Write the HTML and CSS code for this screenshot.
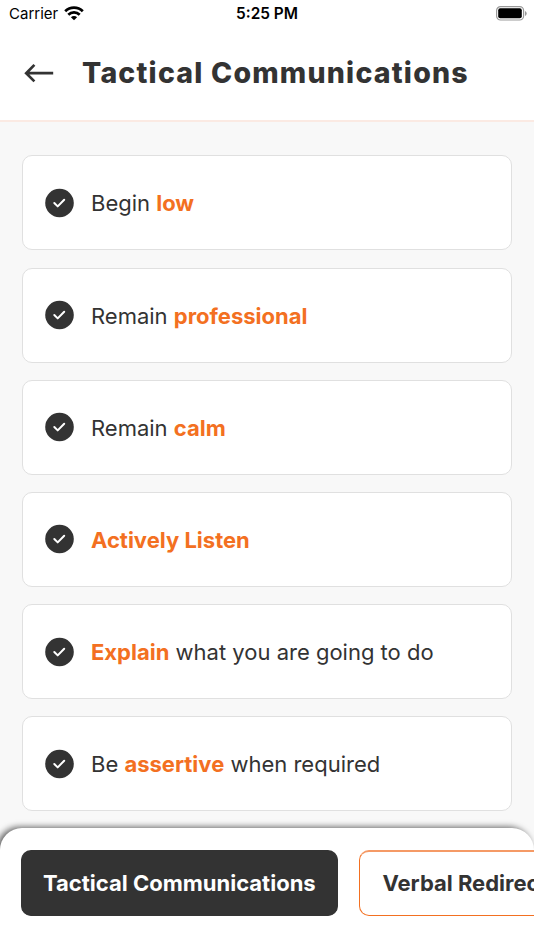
FILE: index.html
```html
<!DOCTYPE html>
<html lang="en">
<head>
<meta charset="utf-8">
<title>Tactical Communications</title>
<link rel="stylesheet" href="styles.css">
</head>
<body>
<div class="screen">
  <div class="status">
    <div class="carrier"><span>Carrier</span>
      <svg width="20" height="15" viewBox="0 0 20 15" fill="none" stroke="#000" stroke-width="2.7"><path d="M1.2 5.3a12.5 12.5 0 0 1 17.6 0M4.3 8.7a8 8 0 0 1 11.4 0"/><path d="M10 14.3L6.9 11.3a4.4 4.4 0 0 1 6.2 0z" fill="#000" stroke="none"/></svg>
    </div>
    <div class="time">5:25 PM</div>
    <svg class="battery" width="31" height="15" viewBox="0 0 31 15"><rect x=".6" y=".6" width="27" height="13.4" rx="4" fill="none" stroke="#999" stroke-width="1.2"/><rect x="2.2" y="2.3" width="23.6" height="10" rx="2"/><path d="M29 5v5q1.7-.8 1.7-2.5T29 5z" fill="#999"/></svg>
  </div>
  <header class="header">
    <svg class="back" width="30" height="20" viewBox="0 0 30 20" fill="none" stroke="#333" stroke-width="2.7"><path d="M29.2 10.2H2.4M10.4 1.9L2.2 10.2l8.2 8.2"/></svg>
    <h1>Tactical Communications</h1>
  </header>
  <main class="list">
    <div class="card"><svg class="check" viewBox="0 0 30 30"><circle cx="14.5" cy="15" r="14.3"/><path d="M9.3 15l3.4 3.4 6.5-6.7"/></svg><p>Begin <b>low</b></p></div>
    <div class="card"><svg class="check" viewBox="0 0 30 30"><circle cx="14.5" cy="15" r="14.3"/><path d="M9.3 15l3.4 3.4 6.5-6.7"/></svg><p>Remain <b>professional</b></p></div>
    <div class="card"><svg class="check" viewBox="0 0 30 30"><circle cx="14.5" cy="15" r="14.3"/><path d="M9.3 15l3.4 3.4 6.5-6.7"/></svg><p>Remain <b>calm</b></p></div>
    <div class="card"><svg class="check" viewBox="0 0 30 30"><circle cx="14.5" cy="15" r="14.3"/><path d="M9.3 15l3.4 3.4 6.5-6.7"/></svg><p><b>Actively Listen</b></p></div>
    <div class="card"><svg class="check" viewBox="0 0 30 30"><circle cx="14.5" cy="15" r="14.3"/><path d="M9.3 15l3.4 3.4 6.5-6.7"/></svg><p><b>Explain</b> what you are going to do</p></div>
    <div class="card"><svg class="check" viewBox="0 0 30 30"><circle cx="14.5" cy="15" r="14.3"/><path d="M9.3 15l3.4 3.4 6.5-6.7"/></svg><p>Be <b>assertive</b> when required</p></div>
  </main>
  <nav class="tabs">
    <div class="tab active">Tactical Communications</div>
    <div class="tab">Verbal Redirection</div>
  </nav>
</div>
</body>
</html>
```
FILE: styles.css
```css
* { box-sizing: border-box; }
body { margin: 0; font-family: Inter, sans-serif; color: #333; }
.screen { width: 534px; height: 950px; overflow: hidden; display: flex; flex-direction: column; background: #f8f8f8; }
.status { height: 27px; flex: none; background: #fff; display: grid; grid-template-columns: 1fr auto 1fr; align-items: center; padding: 0 7px 0 9px; color: #000; }
.carrier { display: flex; align-items: center; gap: 6px; font-size: 15px; }
.carrier svg { margin-top: -1px; }
.time { font-size: 15.4px; font-weight: 600; margin-right: 2px; }
.battery { justify-self: end; }
.header { height: 95px; flex: none; background: #fff; border-bottom: 2px solid #fbeae3; display: flex; align-items: center; padding: 0 24px 1px; gap: 28px; }
h1 { margin: -1px 0 0; font-size: 28.5px; font-weight: 800; letter-spacing: 1.2px; white-space: nowrap; }
.list { flex: none; height: 706px; padding: 33.4px 22.4px 0; display: flex; flex-direction: column; gap: 17.2px; }
.card { height: 95px; flex: none; background: #fff; border: 1.5px solid #e0e0e0; border-radius: 10px; display: flex; align-items: center; padding: 0 21.6px; gap: 16px; }
.check { width: 30px; height: 30px; fill: #333; }
.check path { fill: none; stroke: #fff; stroke-width: 2; stroke-linecap: round; stroke-linejoin: round; }
p { margin: 1px 0 0; font-size: 22px; font-weight: 430; white-space: nowrap; }
b { color: #f37021; font-weight: 680; }
.tabs { height: 122px; flex: none; background: #fff; border-radius: 22px 22px 0 0; box-shadow: -3px -1px 6px rgba(0,0,0,.6); display: flex; gap: 21px; padding: 22.4px 0 0 21px; }
.tab { height: 66px; flex: none; width: 317.4px; border: 1px solid #f37021; border-top: 2px solid #f59a66; border-radius: 10px; padding: 0 22px; font-size: 22px; font-weight: 690; line-height: 62px; white-space: nowrap; }
.active { background: #333; border-color: #333; color: #fff; padding-left: 21px; }
```
